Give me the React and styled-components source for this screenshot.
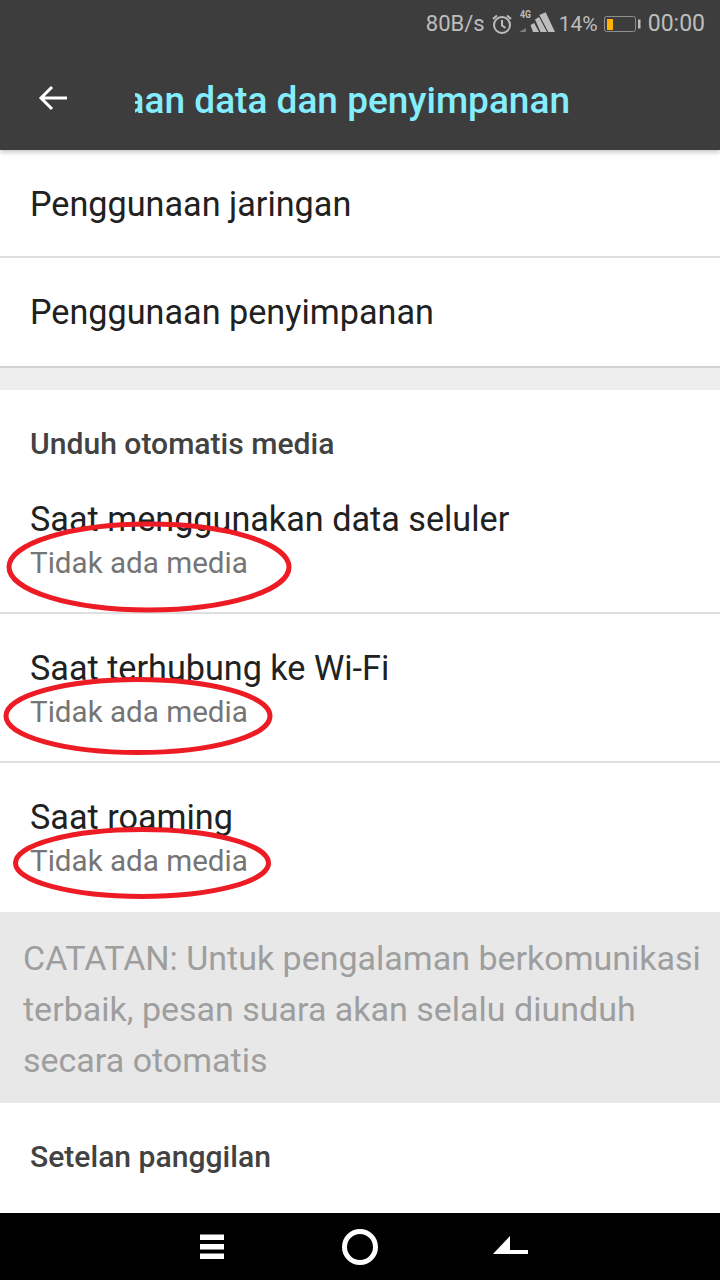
import React from "react";
import styled, { createGlobalStyle } from "styled-components";

const GlobalStyle = createGlobalStyle`
  html, body {
    margin: 0;
    padding: 0;
    background: #fff;
    font-family: Roboto, "Noto Sans", sans-serif;
  }
  * { box-sizing: border-box; }
`;

const Screen = styled.div`
  position: relative;
  width: 720px;
  height: 1280px;
  overflow: hidden;
  display: flex;
  flex-direction: column;
  background: #fff;
`;

const Header = styled.header`
  position: relative;
  z-index: 2;
  height: 150px;
  flex-shrink: 0;
  background: #3d3d3d;
  box-shadow: 0 2px 5px rgba(0, 0, 0, 0.25);
`;

const StatusBar = styled.div`
  height: 48px;
  display: flex;
  justify-content: flex-end;
  align-items: center;
  padding-right: 15px;
  color: #bdbdbd;
`;

const StatusText = styled.span`
  margin-left: ${(props) => props.$gap || 0}px;
  font-size: ${(props) => props.$size}px;
  line-height: 48px;
`;

const StatusIcon = styled.svg`
  display: block;
  flex-shrink: 0;
  margin-left: ${(props) => props.$gap || 0}px;
`;

const ToolBar = styled.div`
  height: 102px;
  display: flex;
  align-items: center;
  padding-left: 38px;
`;

const BackIcon = styled.svg`
  display: block;
  flex-shrink: 0;
  margin-top: -3px;
`;

const TitleClip = styled.div`
  width: 435px;
  margin: 3px 0 0 67px;
  overflow: hidden;
  display: flex;
  justify-content: flex-end;
`;

const Title = styled.h1`
  margin: 0;
  color: #84eeff;
  font-size: 37px;
  font-weight: 500;
  line-height: 48px;
  white-space: nowrap;
`;

const Row = styled.div`
  height: ${(props) => props.$height}px;
  flex-shrink: 0;
  padding: 32px 0 0 30px;
  border-bottom: ${(props) => (props.$last ? "none" : "2px solid #e0e0e0")};
`;

const RowTitle = styled.div`
  color: #212121;
  font-size: 34.2px;
  line-height: 44px;
`;

const RowValue = styled.div`
  color: #757575;
  font-size: 29.6px;
  line-height: 44px;
`;

const Gap = styled.div`
  height: 24px;
  flex-shrink: 0;
  background: #ededed;
  border-top: 2px solid #d2d2d2;
`;

const SectionHead = styled.div`
  height: ${(props) => props.$height}px;
  flex-shrink: 0;
  padding: 36px 0 0 30px;
  color: #424242;
  font-size: 30.1px;
  font-weight: 500;
  line-height: 36px;
`;

const Note = styled.div`
  height: 191px;
  flex-shrink: 0;
  padding: 21px 15px 0 23px;
  background: #e8e8e8;
  color: #9e9e9e;
  font-size: 34px;
  line-height: 51px;
`;

const NavBar = styled.nav`
  height: 67px;
  margin-top: auto;
  flex-shrink: 0;
  background: #000;
  display: flex;
  align-items: center;
  padding-left: 200px;
`;

const NavIcon = styled.svg`
  display: block;
  flex-shrink: 0;
  margin-left: ${(props) => props.$gap || 0}px;
`;

const Annotation = styled.svg`
  position: absolute;
  left: 0;
  top: 0;
  z-index: 3;
  pointer-events: none;
`;

const rings = [
  { cx: 149, cy: 567, rx: 140, ry: 43 },
  { cx: 138, cy: 716, rx: 132, ry: 36.5 },
  { cx: 142, cy: 863, rx: 126.5, ry: 33.5 },
];

const App = () => {
  return (
    <Screen>
      <GlobalStyle />
      <Header>
        <StatusBar>
          <StatusText $size={22}>80B/s</StatusText>
          <StatusIcon $gap={6} width="22" height="24" viewBox="0 0 22 24">
            <circle cx="11" cy="13" r="8" fill="none" stroke="#bdbdbd" strokeWidth="2" />
            <path d="M11 8v5.5l3.5 2.5" fill="none" stroke="#bdbdbd" strokeWidth="2" />
            <path d="M2 7l4-3.5M20 7l-4-3.5" fill="none" stroke="#bdbdbd" strokeWidth="2" />
          </StatusIcon>
          <StatusIcon $gap={5} width="38" height="30" viewBox="0 0 38 30">
            <text x="2" y="8.5" fill="#bdbdbd" fontSize="11" fontWeight="700" fontFamily="Roboto, sans-serif" textLength="11" lengthAdjust="spacingAndGlyphs">4G</text>
            <path d="M1 23l7-4v4z" fill="#7d7d7d" />
            <path d="M12.500 16l3.700-2L21 23h-6zM17 10.500L21 8l8 15h-6.500zM21.300 6l6.400-2.700L37 23h-6.700z" fill="#bdbdbd" />
          </StatusIcon>
          <StatusText $gap={3} $size={21}>14%</StatusText>
          <StatusIcon $gap={6} width="38" height="20" viewBox="0 0 38 20">
            <rect x="0.5" y="2.5" width="31" height="15" rx="2" fill="none" stroke="#8f8f8f" />
            <rect x="3" y="5" width="6" height="11" fill="#ffb300" />
            <rect x="34" y="5.500" width="2.500" height="9" fill="#bdbdbd" />
          </StatusIcon>
          <StatusText $gap={6} $size={23}>00:00</StatusText>
        </StatusBar>
        <ToolBar>
          <BackIcon width="30" height="30" viewBox="0 0 30 30">
            <path d="M29 15H3M14 4L3 15l11 11" fill="none" stroke="#fff" strokeWidth="3" />
          </BackIcon>
          <TitleClip>
            <Title>Penggunaan data dan penyimpanan</Title>
          </TitleClip>
        </ToolBar>
      </Header>

      <Row $height={108}>
        <RowTitle>Penggunaan jaringan</RowTitle>
      </Row>
      <Row $height={108} $last>
        <RowTitle>Penggunaan penyimpanan</RowTitle>
      </Row>
      <Gap />

      <SectionHead $height={75}>Unduh otomatis media</SectionHead>
      <Row $height={149}>
        <RowTitle>Saat menggunakan data seluler</RowTitle>
        <RowValue>Tidak ada media</RowValue>
      </Row>
      <Row $height={149}>
        <RowTitle>Saat terhubung ke Wi-Fi</RowTitle>
        <RowValue>Tidak ada media</RowValue>
      </Row>
      <Row $height={149} $last>
        <RowTitle>Saat roaming</RowTitle>
        <RowValue>Tidak ada media</RowValue>
      </Row>

      <Note>CATATAN: Untuk pengalaman berkomunikasi terbaik, pesan suara akan selalu diunduh secara otomatis</Note>
      <SectionHead $height={110}>Setelan panggilan</SectionHead>

      <NavBar>
        <NavIcon width="24" height="26" viewBox="0 0 24 26">
          <path d="M0 0.500h24v5.500H0zM0 10h24v5.500H0zM0 19.500h24V25H0z" fill="#fff" />
        </NavIcon>
        <NavIcon $gap={118} width="36" height="36" viewBox="0 0 36 36">
          <circle cx="18" cy="18" r="15.500" fill="none" stroke="#fff" strokeWidth="5" />
        </NavIcon>
        <NavIcon $gap={115} width="36" height="36" viewBox="0 0 36 36">
          <path d="M0 25L17 7v14h18v4z" fill="#fff" />
        </NavIcon>
      </NavBar>

      <Annotation width="720" height="1280" viewBox="0 0 720 1280">
        {rings.map((r) => (
          <ellipse key={r.cy} {...r} fill="none" stroke="#ed1c24" strokeWidth="5" />
        ))}
      </Annotation>
    </Screen>
  );
};

export default App;
